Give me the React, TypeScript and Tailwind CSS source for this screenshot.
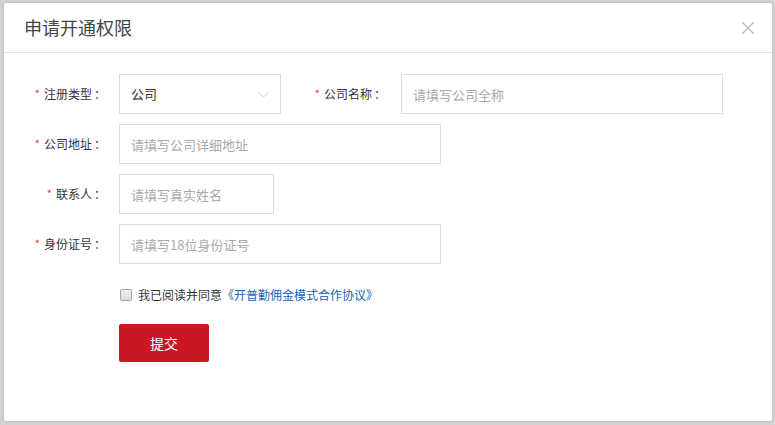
import React, { useState } from 'react';

const Label: React.FC<{ text: string; className?: string }> = ({ text, className = '' }) => (
  <div className={`flex items-center justify-end text-[12px] text-[#333] ${className}`}>
    <span className="text-[#e4393c] mr-[4px] text-[11px] leading-none relative top-[-1px]">*</span>
    <span>{text}</span>
    <span className="pl-[2px] whitespace-nowrap">：</span>
  </div>
);

const Field: React.FC<{ placeholder: string; width: string }> = ({ placeholder, width }) => (
  <input
    className={`h-[40px] ${width} border border-[#dcdcdc] px-[11px] text-[13px] text-[#333] outline-none placeholder:text-[#a9a9a9]`}
    placeholder={placeholder}
  />
);

export default function App() {
  const [agree, setAgree] = useState(false);

  return (
    <div
      className="w-[775px] h-[425px] bg-[#d2d2d2] pt-[3px] pl-[4px] overflow-hidden"
      style={{ fontFamily: '"Noto Sans CJK SC", "Noto Sans", sans-serif' }}
    >
      <div className="w-[768px] h-[418px] bg-white rounded-[2px] shadow-[0_0_3px_rgba(0,0,0,0.15)]">
        {/* Header */}
        <div className="h-[50px] border-b border-[#e2e2e2] flex items-center justify-between pl-[20px] pr-[14px]">
          <h2 className="text-[18px] text-[#444] font-normal">申请开通权限</h2>
          <button className="w-[20px] h-[20px] flex items-center justify-center">
            <svg width="14" height="14" viewBox="0 0 14 14">
              <path d="M1 1L13 13M13 1L1 13" stroke="#bdbdbd" strokeWidth="1.3" />
            </svg>
          </button>
        </div>

        {/* Body */}
        <div className="pt-[21px] flex flex-col gap-[10px]">
          <div className="flex items-center">
            <Label text="注册类型" className="w-[102px]" />
            <div className="ml-[13px] relative h-[40px] w-[162px] border border-[#dcdcdc] flex items-center px-[11px] text-[13px] text-[#333]">
              公司
              <svg className="absolute right-[11px] top-[17px]" width="11" height="6" viewBox="0 0 11 6">
                <path d="M0.5 0.5L5.5 5L10.5 0.5" stroke="#cfcfcf" strokeWidth="1" fill="none" />
              </svg>
            </div>
            <Label text="公司名称" className="w-[105px]" />
            <div className="ml-[15px]">
              <Field placeholder="请填写公司全称" width="w-[322px]" />
            </div>
          </div>

          <div className="flex items-center">
            <Label text="公司地址" className="w-[102px]" />
            <div className="ml-[13px]">
              <Field placeholder="请填写公司详细地址" width="w-[322px]" />
            </div>
          </div>

          <div className="flex items-center">
            <Label text="联系人" className="w-[102px]" />
            <div className="ml-[13px]">
              <Field placeholder="请填写真实姓名" width="w-[155px]" />
            </div>
          </div>

          <div className="flex items-center">
            <Label text="身份证号" className="w-[102px]" />
            <div className="ml-[13px]">
              <Field placeholder="请填写18位身份证号" width="w-[322px]" />
            </div>
          </div>

          <div className="pl-[116px] mt-[12px] flex items-center text-[12px]">
            <button
              onClick={() => setAgree(!agree)}
              className="w-[12px] h-[12px] rounded-[2px] border border-[#a5a5a5] bg-gradient-to-b from-[#f2f2f2] to-[#dcdcdc] mr-[6px]"
            >
              {agree && <span className="block text-[9px] leading-[10px] text-[#333]">✓</span>}
            </button>
            <span className="text-[#333]">我已阅读并同意</span>
            <a className="text-[#1a5fb4] cursor-pointer">《开普勤佣金模式合作协议》</a>
          </div>

          <div className="pl-[115px] mt-[10px]">
            <button className="w-[90px] h-[38px] bg-[#c91823] rounded-[2px] text-white text-[14px]">
              提交
            </button>
          </div>
        </div>
      </div>
    </div>
  );
}
